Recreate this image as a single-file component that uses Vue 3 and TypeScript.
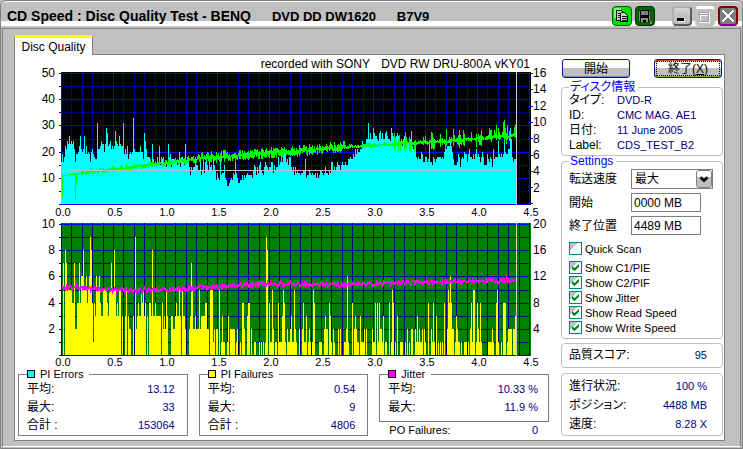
<script setup lang="ts">
import { computed, reactive, ref } from 'vue'

interface StatRow { label: string; value: string }
interface StatGroup { title: string; tone: string; rows: StatRow[] }
type Point = [number, number]

// Plot area units: one unit per sample column, origin at the upper left.
const PLOT_W = 470
const PLOT_H = 133
const BASE = 132
const SAMPLES = 455

const show = reactive({ quick: false, pie: true, pif: true, jitter: true, read: true, write: true })
const speed = ref('最大')
const startPos = ref('0000 MB')
const endPos = ref('4489 MB')

function makeRandom(seed: number): () => number {
  let s = seed
  return () => {
    s = (s * 1664525 + 1013904223) % 4294967296
    return s / 4294967296
  }
}

function interpolate(points: Point[], x: number): number {
  for (let i = 1; i < points.length; i++) {
    const [x1, y1] = points[i]
    if (x <= x1) {
      const [x0, y0] = points[i - 1]
      return y0 + ((y1 - y0) * (x - x0)) / (x1 - x0)
    }
  }
  return points[points.length - 1][1]
}

const pieShape: Point[] = [
  [0, 16], [2, 17], [4, 22], [12, 24], [14, 19], [20, 22], [24, 20], [30, 20], [34, 17], [39, 24], [46, 24], [52, 21],
  [58, 24], [64, 20], [70, 20], [76, 19], [82, 20], [88, 19], [94, 16], [100, 17], [108, 16], [116, 16], [124, 16],
  [128, 15], [138, 14], [146, 14], [154, 14], [158, 10], [163, 13], [166, 8], [172, 11], [179, 9], [188, 12],
  [196, 13], [208, 13], [216, 15], [222, 18], [228, 16], [236, 12], [248, 12], [262, 12], [270, 13], [280, 15],
  [291, 18], [300, 22], [306, 25], [314, 26], [324, 26], [334, 26], [342, 23], [350, 23], [356, 18], [364, 17],
  [370, 16], [382, 19], [388, 22], [393, 16], [404, 18], [414, 19], [424, 16], [434, 18], [440, 19], [446, 18],
  [449, 26], [451, 18], [455, 16],
]
const pieSpikes: Record<number, number> = {
  6: 24, 8: 26, 10: 24, 14: 16, 19: 26, 23: 26, 36: 31, 45: 29, 46: 27, 54: 28, 58: 26, 62: 31, 72: 33, 75: 20,
  78: 20, 83: 27, 84: 24, 91: 23, 98: 22, 107: 23, 118: 20, 124: 23, 134: 18, 142: 17, 148: 17, 152: 17, 159: 16,
  166: 7, 174: 16, 220: 21, 224: 20, 244: 17, 288: 17, 307: 31, 309: 27, 319: 28, 324: 27, 331: 27, 340: 25,
  350: 28, 368: 23, 389: 24, 390: 22, 403: 20, 415: 21, 432: 21, 437: 24, 443: 28, 445: 19, 449: 29, 450: 25,
}
const pieGaps: Record<number, number> = { 29: 16, 43: 20, 67: 17, 82: 17, 90: 15, 97: 15, 105: 14, 129: 11, 140: 11, 155: 9, 233: 11, 239: 11, 245: 10, 399: 14, 431: 14 }

const piePath = computed(() => {
  const rnd = makeRandom(17)
  let d = `M0 ${BASE}`
  for (let x = 0; x < SAMPLES; x++) {
    const wobble = Math.floor(x / 2) % 3 === 0 ? rnd() * 4 - 1 : rnd() * 3 - 2
    const value = pieSpikes[x] ?? pieGaps[x] ?? Math.round(interpolate(pieShape, x) + wobble)
    d += `V${Math.round(BASE - value * 2.62)}H${x + 1}`
  }
  return `${d}V${BASE}Z`
})

const readShape: Point[] = [[0, 103], [14, 102], [24, 100], [60, 96], [100, 91], [130, 87], [180, 83], [220, 80], [280, 75], [310, 73], [365, 70], [410, 67], [455, 63]]
const readPath = computed(() => {
  const rnd = makeRandom(91)
  let d = 'M1.5 103V125M14.5 101V128M15.5 101V113'
  for (let x = 1; x < SAMPLES; x++) {
    const mid = Math.round(interpolate(readShape, x))
    const spread = x < 20 ? 0.5 : x < 100 ? 3 : x < 140 ? 4 : x < 285 ? 6 : 2
    let up = Math.round(rnd() * spread)
    let down = Math.round(rnd() * spread * 0.8) + 1
    if (x > 330 && rnd() > 0.6) {
      up += Math.round(rnd() * 10)
      down += Math.round(rnd() * 7)
    }
    if (x > 425 && rnd() > 0.5) up += Math.round(rnd() * 8)
    d += `M${x + 0.5} ${mid - up}V${mid + down}`
  }
  return d
})

const pifSpikes: Record<number, number> = {
  2: 7, 4: 8, 5: 7, 13: 7, 18: 7, 20: 6, 21: 6, 22: 8, 25: 6, 28: 6, 29: 9, 30: 8, 35: 6, 38: 6, 50: 7, 53: 8,
  54: 5, 65: 5, 74: 9, 80: 5, 82: 5, 91: 8, 105: 5, 118: 5, 121: 5, 130: 7, 131: 5, 138: 5, 149: 5, 150: 5, 151: 5,
  158: 5, 181: 4, 182: 4, 187: 4, 188: 4, 205: 9, 206: 8, 208: 4, 211: 5, 217: 4, 222: 5, 223: 4, 233: 5, 242: 4,
  252: 5, 253: 4, 268: 4, 286: 6, 291: 4, 314: 4, 316: 4, 318: 4, 328: 4, 331: 5, 332: 4, 367: 4, 372: 4, 383: 4,
  387: 5, 388: 4, 389: 6, 390: 4, 410: 4, 412: 5, 413: 5, 416: 4, 419: 4, 435: 4, 436: 5, 442: 4, 443: 4, 444: 4,
}
const pifPath = computed(() => {
  const rnd = makeRandom(43)
  let d = `M0 ${BASE}`
  let value = 0
  for (let x = 0; x < SAMPLES; x++) {
    if (x > 150 || x % 2 === 0 || rnd() > 0.5) {
      const r = rnd()
      if (x < 3) value = 0
      else if (x < 32) value = r > 0.85 ? 2 : r > 0.6 ? 4 : 5
      else if (x < 60) value = r > 0.8 ? 1 : r > 0.5 ? 3 : r > 0.25 ? 4 : 5
      else if (x < 110) value = r > 0.85 ? 0 : r > 0.7 ? 2 : r > 0.2 ? 3 : 4
      else if (x < 152) value = r > 0.87 ? 0 : r > 0.55 ? 2 : r > 0.1 ? 3 : 4
      else if (x < 190) value = r > 0.6 ? 0 : r > 0.35 ? 1 : r > 0.15 ? 2 : 3
      else if (x < 210) value = r > 0.5 ? 0 : r > 0.1 ? 1 : 2
      else value = r > 0.6 ? 0 : r > 0.3 ? 1 : r > 0.1 ? 2 : 3
    }
    d += `V${Math.round(BASE - (pifSpikes[x] ?? value) * 13.1)}H${x + 1}`
  }
  return `${d}V${BASE}Z`
})

const jitterShape: Point[] = [[0, 65], [16, 64], [30, 66], [60, 67], [100, 67], [130, 65], [160, 64], [180, 62], [210, 61], [240, 61], [280, 62], [330, 60], [380, 59], [440, 58], [455, 56]]
const jitterPath = computed(() => {
  const rnd = makeRandom(7)
  let d = ''
  let last = 65
  for (let x = 1; x < SAMPLES; x++) {
    const y = x === 14 ? 58 : Math.round(interpolate(jitterShape, x) + (rnd() - 0.5) * 6)
    d += `M${x + 0.5} ${Math.min(last, y) - 1}V${Math.max(last, y) + 1}`
    last = Math.round((y + interpolate(jitterShape, x)) / 2)
  }
  return d
})

function columns(major: boolean): string {
  let d = ''
  for (let i = 0; i <= 45; i++) {
    if ((i % 5 === 0) === major) d += `M${Math.round(i * 10.4) + 0.5} 0V${PLOT_H}`
  }
  return d
}
function lines(major: boolean): string {
  let d = ''
  for (let i = 0; i <= 10; i++) {
    if ((i % 2 === 0) === major) d += `M-2 ${Math.round(1 + i * 13.1) + 0.5}H468`
  }
  return d
}
const rightTicks = Array.from({ length: 9 }, (_, i) => `M467 ${Math.round(1 + i * 16.3) + 0.5}H472`).join('')

const timeLabels = ['0.0', '0.5', '1.0', '1.5', '2.0', '2.5', '3.0', '3.5', '4.0', '4.5']
const errorLabels = ['50', '40', '30', '20', '10', '']
const speedLabels = ['16', '14', '12', '10', '8', '6', '4', '2', '']
const failureLabels = ['10', '8', '6', '4', '2', '']
const jitterLabels = ['20', '16', '12', '8', '4', '']

const groups: StatGroup[] = [
  { title: 'PI Errors', tone: 'cyan', rows: [{ label: '平均:', value: '13.12' }, { label: '最大:', value: '33' }, { label: '合計 :', value: '153064' }] },
  { title: 'PI Failures', tone: 'yellow', rows: [{ label: '平均:', value: '0.54' }, { label: '最大:', value: '9' }, { label: '合計 :', value: '4806' }] },
]
const jitterRows: StatRow[] = [{ label: '平均:', value: '10.33 %' }, { label: '最大:', value: '11.9 %' }]
const discInfo: StatRow[] = [
  { label: 'タイプ:', value: 'DVD-R' },
  { label: 'ID:', value: 'CMC MAG. AE1' },
  { label: '日付:', value: '11 June 2005' },
  { label: 'Label:', value: 'CDS_TEST_B2' },
]
const progress: StatRow[] = [
  { label: '進行状況:', value: '100 %' },
  { label: 'ポジション:', value: '4488 MB' },
  { label: '速度:', value: '8.28 X' },
]
</script>

<template>
  <div class="window">
    <header class="titlebar">
      <h1 class="title">CD Speed : Disc Quality Test - BENQ <span>DVD DD DW1620</span> <span>B7V9</span></h1>
      <div class="tools">
        <button class="tool copy" type="button" aria-label="Copy">
          <svg viewBox="0 0 20 20" shape-rendering="crispEdges">
            <path d="M1 1h8v3H5v4H3v4H1z" fill="#7dff7d" />
            <path d="M3.500 3.500h5l2 2v9h-7z" fill="#c8c8c8" stroke="#000" />
            <path d="M8.500 6.500h5l3 3v7h-8z" fill="#d0d0d0" stroke="#000" />
            <path d="M5 7.500h3M5 9.500h3M5 11.500h3M10 10.500h5M10 12.500h5M10 14.500h5" stroke="#000" />
          </svg>
        </button>
        <button class="tool save" type="button" aria-label="Save">
          <svg viewBox="0 0 20 20" shape-rendering="crispEdges">
            <path d="M3 3h13v14H5l-2-2z" fill="#000" />
            <path d="M6 4h7v5H6z" fill="#808080" />
            <path d="M3.500 4V15M15.500 4V16" stroke="#909090" />
            <path d="M6 12h7v5h-2v-3H8v3H6z" fill="#909090" />
            <path d="M16 16h2v3h-2z" fill="#808080" />
          </svg>
        </button>
        <button class="tool min" type="button" aria-label="Minimize">
          <svg viewBox="0 0 20 20" shape-rendering="crispEdges"><path d="M4 12h8v4H4z" fill="#000" /><path d="M5 16.500h8V13" fill="none" stroke="#fff" /></svg>
        </button>
        <button class="tool max" type="button" aria-label="Maximize" disabled>
          <svg viewBox="0 0 20 20" shape-rendering="crispEdges"><path d="M5 5h12v12H5zM5 8h12" fill="none" stroke="#fff" stroke-width="2" /><path d="M4 4h12v12H4zM4 7h12" fill="none" stroke="#909090" /></svg>
        </button>
        <button class="tool close" type="button" aria-label="Close">
          <svg viewBox="0 0 20 20"><path d="M3 3l14 14M17 3L3 17" stroke="#222" stroke-width="4" /><path d="M3 3l14 14M17 3L3 17" stroke="#fff" stroke-width="3" /></svg>
        </button>
      </div>
    </header>

    <main class="body">
      <nav class="tabs"><button class="tab" type="button">Disc Quality</button></nav>
      <div class="panel">
        <section class="results">
          <p class="recorder">recorded with SONY <span>DVD RW DRU-800A</span> <span>vKY01</span></p>

          <div class="chart">
            <div class="scale left"><span v-for="(t, i) in errorLabels" :key="i">{{ t }}</span></div>
            <svg class="plot black" :viewBox="`0 0 ${PLOT_W} ${PLOT_H}`" preserveAspectRatio="none" shape-rendering="crispEdges" role="img" aria-label="PI Errors">
              <path :d="columns(false) + lines(false)" stroke="#000090" />
              <path :d="columns(true) + lines(true) + rightTicks" stroke="#0000ff" />
              <path v-if="show.pie" :d="piePath" fill="#00ffff" />
              <path v-if="show.read" :d="readPath" stroke="#00ff00" />
              <path v-if="show.write" d="M1 99.500H9M9 98.500H452" stroke="#c0c0c0" />
              <path d="M455.500 0V133" stroke="#c8c8c8" />
            </svg>
            <div class="scale right"><span v-for="(t, i) in speedLabels" :key="i">{{ t }}</span></div>
            <div class="times"><span v-for="t in timeLabels" :key="t">{{ t }}</span></div>
          </div>

          <div class="chart">
            <div class="scale left"><span v-for="(t, i) in failureLabels" :key="i">{{ t }}</span></div>
            <svg class="plot green" :viewBox="`0 0 ${PLOT_W} ${PLOT_H}`" preserveAspectRatio="none" shape-rendering="crispEdges" role="img" aria-label="PI Failures">
              <path :d="columns(false) + lines(false)" stroke="#000080" />
              <path :d="columns(true) + lines(true)" stroke="#0000c0" />
              <path d="M-2 1.500H468" stroke="#0000ff" />
              <path v-if="show.pif" :d="pifPath" fill="#ffff00" />
              <path v-if="show.jitter" :d="jitterPath" stroke="#ff00ff" />
              <path d="M455.500 0V133" stroke="#c8c8c8" />
            </svg>
            <div class="scale right"><span v-for="(t, i) in jitterLabels" :key="i">{{ t }}</span></div>
            <div class="times"><span v-for="t in timeLabels" :key="t">{{ t }}</span></div>
          </div>

          <div class="stats">
            <fieldset v-for="g in groups" :key="g.title" class="stat">
              <legend><i :class="['swatch', g.tone]"></i>{{ g.title }}</legend>
              <dl><div v-for="r in g.rows" :key="r.label"><dt>{{ r.label }}</dt><dd>{{ r.value }}</dd></div></dl>
            </fieldset>
            <div class="jitter">
              <fieldset class="stat">
                <legend><i class="swatch magenta"></i>Jitter</legend>
                <dl><div v-for="r in jitterRows" :key="r.label"><dt>{{ r.label }}</dt><dd>{{ r.value }}</dd></div></dl>
              </fieldset>
              <dl class="po"><div><dt>PO Failures:</dt><dd>0</dd></div></dl>
            </div>
          </div>
        </section>

        <aside class="side">
          <div class="actions">
            <button class="push" type="button">開始</button>
            <button class="push default" type="button">終了(<u>X</u>)</button>
          </div>

          <fieldset class="box disc">
            <legend>ディスク情報</legend>
            <dl><div v-for="r in discInfo" :key="r.label"><dt>{{ r.label }}</dt><dd>{{ r.value }}</dd></div></dl>
          </fieldset>

          <fieldset class="box settings">
            <legend>Settings</legend>
            <div class="fields">
              <label for="speed">転送速度</label>
              <div class="select">
                <select id="speed" v-model="speed"><option>最大</option></select>
                <svg viewBox="0 0 16 18" aria-hidden="true"><path d="M4 7l4 4 4-4" fill="none" stroke="#000" stroke-width="3" /></svg>
              </div>
              <label for="start">開始</label>
              <input id="start" v-model="startPos" type="text" />
              <label for="end">終了位置</label>
              <input id="end" v-model="endPos" type="text" />
            </div>
            <div class="checks">
              <label class="quick"><input v-model="show.quick" type="checkbox" />Quick Scan</label>
              <label><input v-model="show.pie" type="checkbox" />Show C1/PIE</label>
              <label><input v-model="show.pif" type="checkbox" />Show C2/PIF</label>
              <label><input v-model="show.jitter" type="checkbox" />Show Jitter</label>
              <label><input v-model="show.read" type="checkbox" />Show Read Speed</label>
              <label><input v-model="show.write" type="checkbox" />Show Write Speed</label>
            </div>
          </fieldset>

          <dl class="box score"><div><dt>品質スコア:</dt><dd>95</dd></div></dl>
          <dl class="box progress"><div v-for="r in progress" :key="r.label"><dt>{{ r.label }}</dt><dd>{{ r.value }}</dd></div></dl>
        </aside>
      </div>
    </main>
  </div>
</template>

<style>
body { background: #c0c0c0; }
</style>

<style scoped>
* { box-sizing: border-box; }
.window {
  min-height: 100vh;
  display: flex;
  flex-direction: column;
  background: #c0c0c0;
  border: 1px solid #808080;
  border-radius: 6px 6px 0 0;
  color: #000;
  font: 12px/14px "Liberation Sans", "Noto Sans CJK JP", sans-serif;
  font-feature-settings: "palt";
}
button, input, select { font: inherit; color: inherit; margin: 0; }
dl, dd, p, h1, fieldset { margin: 0; padding: 0; }
fieldset { min-width: 0; }
dl > div { display: flex; justify-content: space-between; white-space: nowrap; }
dd { color: #000080; font-size: 11px; }

.titlebar {
  display: flex;
  justify-content: space-between;
  align-items: center;
  height: 26px;
  padding: 3px 4px 0 6px;
  border-top: 1px solid #fff;
  border-radius: 6px 6px 0 0;
  background: linear-gradient(#c0c0c0 19px, #fff 19px, #fff 24px, #c0c0c0 24px);
}
.title { font-size: 14px; line-height: 16px; font-weight: bold; white-space: nowrap; }
.title span { margin-left: 17px; font-size: 13px; }
.tools { display: flex; gap: 3px; }
.tool { width: 20px; height: 20px; padding: 0; border: 1px solid #606060; border-radius: 4px; overflow: hidden; background: #c0c0c0; }
.tool svg { display: block; width: 18px; height: 18px; }
.copy { background: #00e000; border-color: #006000; }
.save { background: #006400; border-color: #003000; }
.min { margin-left: 14px; background: linear-gradient(#d8d8d8, #c0c0c0 50%); border: 2px outset #b0b0b0; }
.max { background: #c0c0c0; border: 1px solid #c0c0c0; border-top: 3px solid #fff; }
.close { background: #808080; border: 2px solid #800000; border-bottom-color: #800080; }
.min svg, .max svg, .close svg { width: 16px; height: 16px; }

.body {
  flex: 1;
  display: flex;
  flex-direction: column;
  margin: 1px;
  padding: 6px 15px 5px 11px;
  border: 1px solid #808080;
  border-bottom-color: #fff;
}
.tabs { display: flex; height: 19px; }
.tab {
  width: 79px;
  height: 20px;
  padding: 0;
  border: 0 solid #808080;
  border-width: 3px 1px 0;
  border-top-color: #ff0;
  border-radius: 2px 2px 0 0;
  background: #fff;
  line-height: 14px;
  position: relative;
  z-index: 1;
}
.panel {
  flex: 1;
  display: flex;
  gap: 12px;
  padding: 2px 1px 2px 3px;
  border: 1px solid #808080;
  background: #fff;
}
.results { flex: 1; min-width: 0; }
.recorder { height: 15px; padding-right: 19px; text-align: right; line-height: 14px; white-space: nowrap; }
.recorder span { margin-left: 8px; }
.recorder span + span { margin-left: 1px; }

.chart { display: grid; grid-template-columns: 43px minmax(0, 1fr) 18px; }
.plot { display: block; width: 100%; height: 133px; overflow: visible; }
.plot.black { background: #000; }
.plot.green { background: #008000; }
.scale { display: flex; flex-direction: column; justify-content: space-between; height: 145px; margin: -6px 0; line-height: 14px; }
.scale span { height: 14px; }
.left { align-items: flex-end; padding-right: 6px; }
.right { padding-left: 2px; }
.times { grid-column: 2; display: flex; justify-content: space-between; height: 18px; padding-left: 2px; font-size: 11px; line-height: 14px; }
.times span { display: flex; justify-content: center; width: 0; }
.chart + .chart .times { height: 12px; line-height: 12px; }

.stats { display: grid; grid-template-columns: repeat(3, minmax(0, 1fr)); gap: 11px; align-items: start; }
.stat { border: 1px solid #808080; padding: 0 12px 1px 8px; }
.stat legend { display: flex; align-items: center; gap: 5px; height: 12px; padding: 0 6px 0 0; font-size: 11px; line-height: 12px; }
.stat dl > div { line-height: 18px; }
.swatch { width: 8px; height: 8px; border: 1px solid #000; }
.cyan { background: #0ff; }
.yellow { background: #ff0; }
.magenta { background: #f0f; }
.jitter .stat { padding-bottom: 5px; padding-right: 10px; }
.po { padding: 1px 11px 0 10px; }
.po dt { font-size: 11px; }

.side { width: 162px; }
.actions { display: flex; justify-content: space-between; padding: 2px 1px 4px; }
.push {
  width: 68px;
  height: 19px;
  padding: 0;
  border: 1px solid #002080;
  border-radius: 3px;
  background: linear-gradient(#fff 50%, #c0c0c0 50%);
  box-shadow: inset 0 -1px #8080c0;
  line-height: 16px;
}
.push.default { outline: 1px dotted #000; outline-offset: -3px; box-shadow: inset 0 -1px #a0a040, inset 0 1px #a05050; }
.box { border: 1px solid #c0c0c0; border-radius: 4px; padding: 0 15px 0 7px; }
.box legend { height: 10px; padding: 0 3px 0 1px; line-height: 10px; color: #00f; }
.disc { padding-top: 1px; padding-bottom: 2px; }
.disc dl > div { display: grid; grid-template-columns: 48px 1fr; line-height: 15px; }
.settings { padding: 3px 8px 3px 7px; }
.fields { display: grid; grid-template-columns: 62px minmax(0, 1fr); row-gap: 4px; align-items: center; }
.fields input, .select { height: 19px; border: 1px solid #808080; background: #fff; }
.fields input { width: 70px; padding: 0 2px; border-radius: 0; }
.select { display: flex; position: relative; width: 82px; height: 20px; }
.select select { flex: 1; appearance: none; padding: 0 18px 0 3px; border: 0; border-radius: 0; background: transparent; }
.select svg { position: absolute; right: 0; top: 0; width: 16px; height: 18px; border: 1px solid #808080; border-radius: 3px; background: linear-gradient(#fff 35%, #c0c0c0 35%); pointer-events: none; }
.checks { margin-top: 6px; font-size: 11px; }
.checks label { display: flex; align-items: center; gap: 3px; height: 15px; }
.checks .quick { margin-bottom: 4px; }
.checks input {
  appearance: none;
  width: 13px;
  height: 13px;
  border: 1px solid #008080;
  background: linear-gradient(135deg, #c0c0c0 35%, #fff 35%);
  position: relative;
}
.checks input:checked::after {
  content: "";
  position: absolute;
  inset: 2px;
  background: #008000;
  clip-path: polygon(0 30%, 35% 60%, 100% 0, 100% 40%, 35% 100%, 0 70%);
}
.score { margin-top: 4px; line-height: 23px; }
.progress { margin-top: 5px; padding-top: 3px; padding-bottom: 1px; line-height: 19px; }
</style>
